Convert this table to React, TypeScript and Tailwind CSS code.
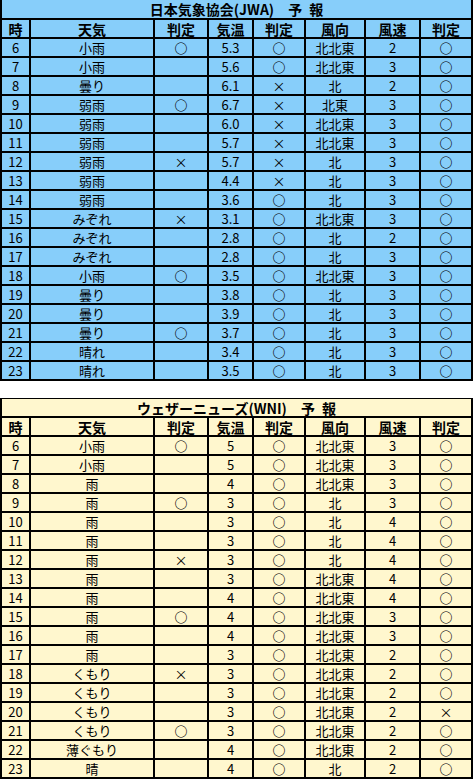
import React from "react";

type Row = [string, string, string, string, string, string, string, string];

const jwa: Row[] = [
  ["6", "小雨", "○", "5.3", "○", "北北東", "2", "○"],
  ["7", "小雨", "", "5.6", "○", "北北東", "3", "○"],
  ["8", "曇り", "", "6.1", "×", "北", "2", "○"],
  ["9", "弱雨", "○", "6.7", "×", "北東", "3", "○"],
  ["10", "弱雨", "", "6.0", "×", "北北東", "3", "○"],
  ["11", "弱雨", "", "5.7", "×", "北北東", "3", "○"],
  ["12", "弱雨", "×", "5.7", "×", "北", "3", "○"],
  ["13", "弱雨", "", "4.4", "×", "北", "3", "○"],
  ["14", "弱雨", "", "3.6", "○", "北", "3", "○"],
  ["15", "みぞれ", "×", "3.1", "○", "北北東", "3", "○"],
  ["16", "みぞれ", "", "2.8", "○", "北", "2", "○"],
  ["17", "みぞれ", "", "2.8", "○", "北", "3", "○"],
  ["18", "小雨", "○", "3.5", "○", "北北東", "3", "○"],
  ["19", "曇り", "", "3.8", "○", "北", "3", "○"],
  ["20", "曇り", "", "3.9", "○", "北", "3", "○"],
  ["21", "曇り", "○", "3.7", "○", "北", "3", "○"],
  ["22", "晴れ", "", "3.4", "○", "北", "3", "○"],
  ["23", "晴れ", "", "3.5", "○", "北", "3", "○"],
];

const wni: Row[] = [
  ["6", "小雨", "○", "5", "○", "北北東", "3", "○"],
  ["7", "小雨", "", "5", "○", "北北東", "3", "○"],
  ["8", "雨", "", "4", "○", "北北東", "3", "○"],
  ["9", "雨", "○", "3", "○", "北", "3", "○"],
  ["10", "雨", "", "3", "○", "北", "4", "○"],
  ["11", "雨", "", "3", "○", "北", "4", "○"],
  ["12", "雨", "×", "3", "○", "北", "4", "○"],
  ["13", "雨", "", "3", "○", "北北東", "4", "○"],
  ["14", "雨", "", "4", "○", "北北東", "4", "○"],
  ["15", "雨", "○", "4", "○", "北北東", "3", "○"],
  ["16", "雨", "", "4", "○", "北北東", "3", "○"],
  ["17", "雨", "", "3", "○", "北北東", "2", "○"],
  ["18", "くもり", "×", "3", "○", "北北東", "2", "○"],
  ["19", "くもり", "", "3", "○", "北北東", "2", "○"],
  ["20", "くもり", "", "3", "○", "北北東", "2", "×"],
  ["21", "くもり", "○", "3", "○", "北北東", "2", "○"],
  ["22", "薄ぐもり", "", "4", "○", "北北東", "2", "○"],
  ["23", "晴", "", "4", "○", "北", "2", "○"],
];

const headers = ["時", "天気", "判定", "気温", "判定", "風向", "風速", "判定"];

function Table({
  title,
  rows,
  bg,
  top,
}: {
  title: string;
  rows: Row[];
  bg: string;
  top: boolean;
}) {
  return (
    <div
      className={`grid w-[473px] grid-cols-[27px_122px_52px_43px_50px_58px_53px_50px] gap-[2px] bg-black px-[2px] pb-[2px] ${
        top ? "pt-0" : "pt-[1px]"
      }`}
    >
      <div
        className={`col-span-8 flex items-center justify-center whitespace-pre font-bold text-[14px] leading-none ${bg} ${
          top ? "h-[18px]" : "h-[17px]"
        }`}
      >
        {title}
      </div>
      {headers.map((h, i) => (
        <div
          key={"h" + i}
          className={`flex h-[17px] items-center justify-center text-[14px] font-bold leading-none ${bg}`}
        >
          {h}
        </div>
      ))}
      {rows.map((r, ri) =>
        r.map((c, ci) => (
          <div
            key={ri + "-" + ci}
            className={`flex h-[17px] items-center justify-center text-[13px] leading-none ${bg} ${
              c === "○" ? "font-bold" : ""
            }`}
          >
            {c}
          </div>
        ))
      )}
    </div>
  );
}

export default function App() {
  return (
    <div
      className="min-h-[780px] w-[475px] bg-white text-black"
      style={{ fontFamily: '"Noto Sans CJK JP", "Liberation Sans", sans-serif' }}
    >
      <Table title={"日本気象協会(JWA)\u3000予\u2002報"} rows={jwa} bg="bg-[#87cefa]" top={true} />
      <div className="h-[17px]" />
      <Table title={"ウェザーニューズ(WNI)\u3000予\u2002報"} rows={wni} bg="bg-[#fff7ce]" top={false} />
    </div>
  );
}
